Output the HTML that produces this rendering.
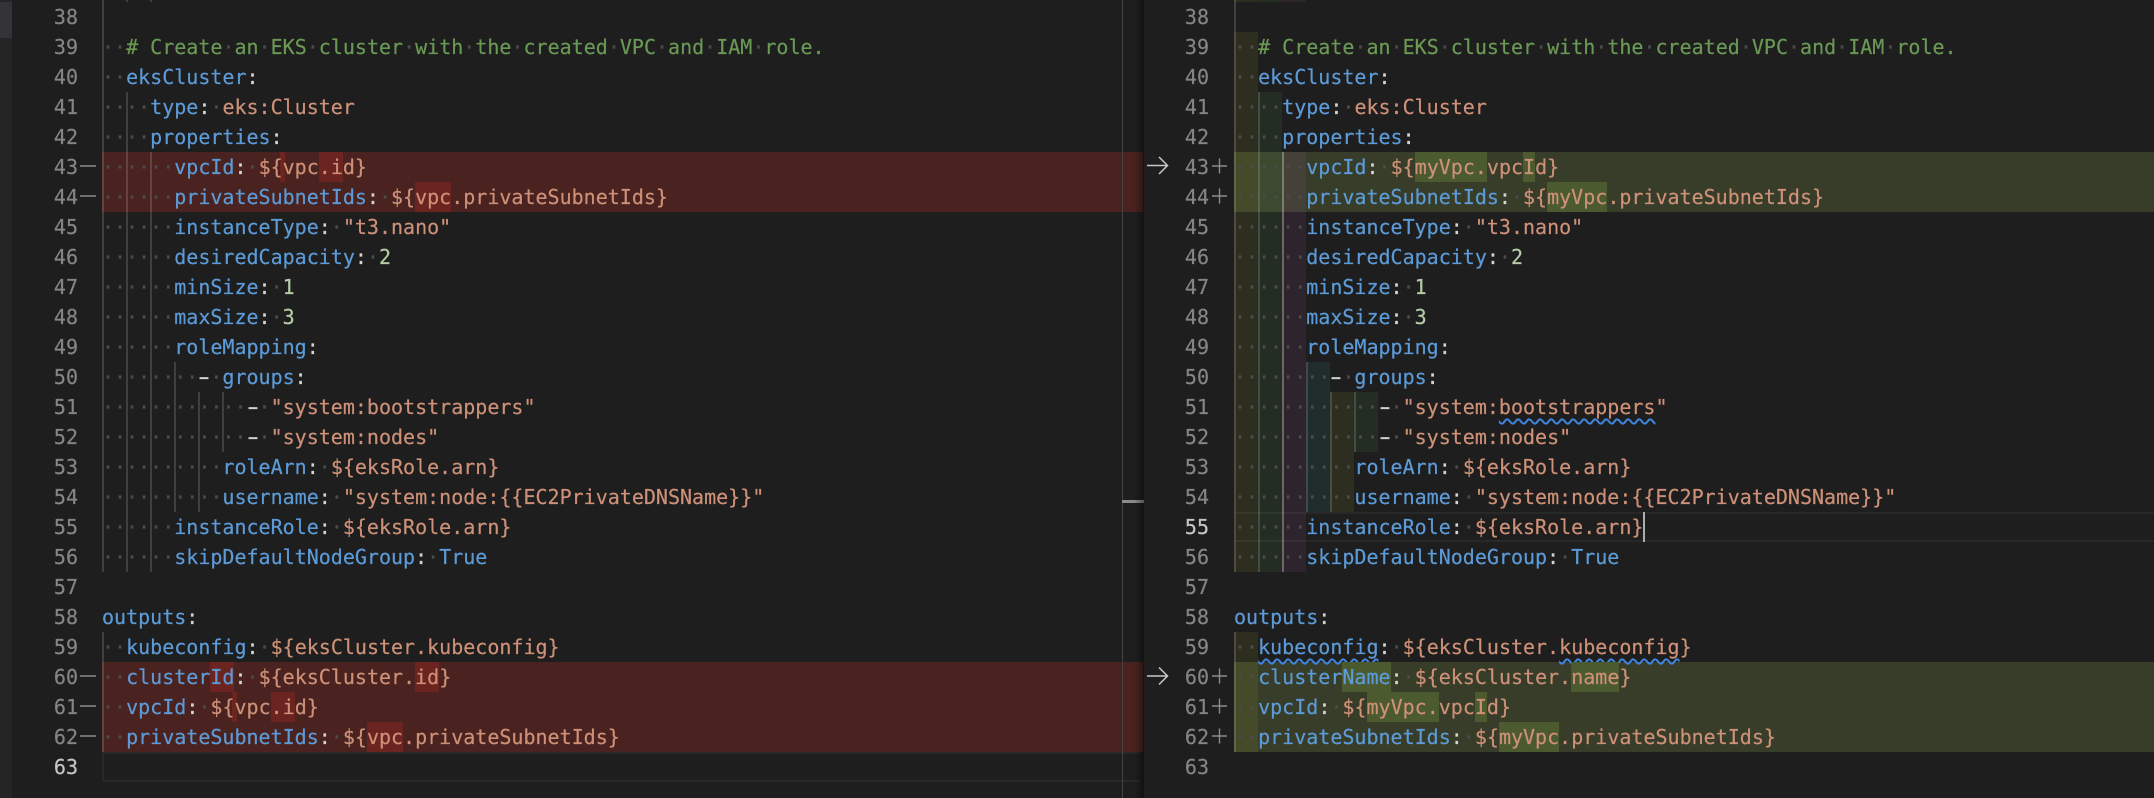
<!DOCTYPE html>
<html><head><meta charset="utf-8"><style>
html,body{margin:0;padding:0;background:#1e1e1e;width:2154px;height:798px;overflow:hidden}
#r{position:relative;width:2154px;height:798px;overflow:hidden;background:#1e1e1e;font:20px/30px "DejaVu Sans Mono","Liberation Mono",monospace;color:#d4d4d4;-webkit-text-stroke:.2px}
#r div.a{position:absolute}
.t{position:absolute;top:2px;overflow:hidden;height:796px}
.t div{height:30px;white-space:pre}
i{font-style:normal;color:#4c4c4c}
b{font-weight:normal;color:#5c9bd8}
u{text-decoration:none;color:#ce9178}
s{text-decoration:none;color:#6a9955}
mark{display:inline-block;height:30px;vertical-align:top;color:inherit}
.L mark{background:#6b2420}
.R mark{background:#4c5a30}
.n{position:absolute;top:2px;text-align:right;color:#858585;width:60px}
.n div{height:30px}
.w{text-decoration:underline wavy #3f84de;text-decoration-thickness:1.8px;text-underline-offset:4px;text-decoration-skip-ink:none}
.h{display:inline-block;transform:scaleX(1.7)}
svg{position:absolute;left:0;top:0}
</style></head><body><div id="r">
<div class="a" style="left:0;top:0;width:12px;height:798px;background:#252526"></div>
<div class="a" style="left:0;top:2px;width:12px;height:36px;background:#333338"></div>

<!-- left line backgrounds -->
<div class="a" style="left:102px;top:152px;width:1041px;height:60px;background:#4a2320"></div>
<div class="a" style="left:102px;top:662px;width:1041px;height:90px;background:#4a2320"></div>
<div class="a" style="left:280px;top:152px;width:5px;height:30px;background:#6b2420"></div>
<div class="a" style="left:232px;top:692px;width:5px;height:30px;background:#6b2420"></div>
<div class="a" style="left:102px;top:752px;width:1038px;height:30px;box-sizing:border-box;border:2px solid #282828;border-right:0"></div>

<!-- right line backgrounds -->
<div class="a" style="left:1234px;top:152px;width:920px;height:60px;background:#373d29"></div>
<div class="a" style="left:1234px;top:662px;width:920px;height:90px;background:#373d29"></div>
<div class="a" style="left:1234px;top:512px;width:920px;height:30px;box-sizing:border-box;border-top:2px solid #282828;border-bottom:2px solid #282828"></div>

<!-- indent rainbow -->
<div class="a" style="left:1234px;top:0;width:24px;height:2px;background:rgba(255,255,64,.07)"></div>
<div class="a" style="left:1258px;top:0;width:24px;height:2px;background:rgba(127,255,127,.07)"></div>
<div class="a" style="left:1282px;top:0;width:24px;height:2px;background:rgba(255,127,255,.07)"></div>
<div class="a" style="left:1234px;top:32px;width:24px;height:540px;background:rgba(255,255,64,.07)"></div>
<div class="a" style="left:1234px;top:632px;width:24px;height:120px;background:rgba(255,255,64,.07)"></div>
<div class="a" style="left:1258px;top:92px;width:24px;height:480px;background:rgba(127,255,127,.07)"></div>
<div class="a" style="left:1282px;top:152px;width:24px;height:420px;background:rgba(255,127,255,.07)"></div>
<div class="a" style="left:1306px;top:362px;width:24px;height:150px;background:rgba(79,236,236,.07)"></div>
<div class="a" style="left:1330px;top:392px;width:24px;height:120px;background:rgba(255,255,64,.07)"></div>
<div class="a" style="left:1354px;top:392px;width:24px;height:60px;background:rgba(127,255,127,.07)"></div>

<!-- left guides -->
<div class="a" style="left:102px;top:0;width:2px;height:572px;background:rgba(255,255,255,.15)"></div>
<div class="a" style="left:102px;top:632px;width:2px;height:120px;background:rgba(255,255,255,.15)"></div>
<div class="a" style="left:126px;top:0;width:2px;height:2px;background:rgba(255,255,255,.15)"></div>
<div class="a" style="left:150px;top:0;width:2px;height:2px;background:rgba(255,255,255,.15)"></div>
<div class="a" style="left:126px;top:92px;width:2px;height:480px;background:rgba(255,255,255,.15)"></div>
<div class="a" style="left:150px;top:152px;width:2px;height:420px;background:rgba(255,255,255,.15)"></div>
<div class="a" style="left:174px;top:362px;width:2px;height:150px;background:rgba(255,255,255,.15)"></div>
<div class="a" style="left:198px;top:392px;width:2px;height:120px;background:rgba(255,255,255,.15)"></div>
<div class="a" style="left:222px;top:392px;width:2px;height:60px;background:rgba(255,255,255,.15)"></div>

<!-- right guides -->
<div class="a" style="left:1234px;top:0;width:2px;height:572px;background:rgba(255,255,255,.15)"></div>
<div class="a" style="left:1234px;top:632px;width:2px;height:120px;background:rgba(255,255,255,.15)"></div>
<div class="a" style="left:1258px;top:92px;width:2px;height:480px;background:rgba(255,255,255,.15)"></div>
<div class="a" style="left:1282px;top:152px;width:2px;height:420px;background:rgba(255,255,255,.3)"></div>
<div class="a" style="left:1306px;top:362px;width:2px;height:150px;background:rgba(255,255,255,.15)"></div>
<div class="a" style="left:1330px;top:392px;width:2px;height:120px;background:rgba(255,255,255,.15)"></div>
<div class="a" style="left:1354px;top:392px;width:2px;height:60px;background:rgba(255,255,255,.15)"></div>

<!-- sash -->
<div class="a" style="left:1122px;top:0;width:1px;height:798px;background:#444"></div>
<div class="a" style="left:1122px;top:500px;width:22px;height:3px;background:#8a8a8a"></div>
<div class="a" style="left:1134px;top:0;width:10px;height:798px;background:linear-gradient(to right,rgba(0,0,0,0),rgba(0,0,0,.4))"></div>

<!-- line numbers -->
<div class="n" style="left:18px"><div>38</div><div>39</div><div>40</div><div>41</div><div>42</div><div>43</div><div>44</div><div>45</div><div>46</div><div>47</div><div>48</div><div>49</div><div>50</div><div>51</div><div>52</div><div>53</div><div>54</div><div>55</div><div>56</div><div>57</div><div>58</div><div>59</div><div>60</div><div>61</div><div>62</div><div style="color:#c6c6c6">63</div></div>
<div class="n" style="left:1149px"><div>38</div><div>39</div><div>40</div><div>41</div><div>42</div><div>43</div><div>44</div><div>45</div><div>46</div><div>47</div><div>48</div><div>49</div><div>50</div><div>51</div><div>52</div><div>53</div><div>54</div><div style="color:#c6c6c6">55</div><div>56</div><div>57</div><div>58</div><div>59</div><div>60</div><div>61</div><div>62</div><div>63</div></div>

<!-- left text -->
<div class="t L" style="left:102px;width:1020px"><div></div>
<div><i>··</i><s># Create<i>·</i>an<i>·</i>EKS<i>·</i>cluster<i>·</i>with<i>·</i>the<i>·</i>created<i>·</i>VPC<i>·</i>and<i>·</i>IAM<i>·</i>role.</s></div>
<div><i>··</i><b>eksCluster</b>:</div>
<div><i>····</i><b>type</b>:<i>·</i><u>eks:Cluster</u></div>
<div><i>····</i><b>properties</b>:</div>
<div><i>······</i><b>vpcId</b>:<i>·</i><u>${vpc<mark>.i</mark>d}</u></div>
<div><i>······</i><b>privateSubnetIds</b>:<i>·</i><u>${<mark>vpc</mark>.privateSubnetIds}</u></div>
<div><i>······</i><b>instanceType</b>:<i>·</i><u>"t3.nano"</u></div>
<div><i>······</i><b>desiredCapacity</b>:<i>·</i><span style="color:#b5cea8">2</span></div>
<div><i>······</i><b>minSize</b>:<i>·</i><span style="color:#b5cea8">1</span></div>
<div><i>······</i><b>maxSize</b>:<i>·</i><span style="color:#b5cea8">3</span></div>
<div><i>······</i><b>roleMapping</b>:</div>
<div><i>········</i><span class="h">-</span><i>·</i><b>groups</b>:</div>
<div><i>············</i><span class="h">-</span><i>·</i><u>"system:bootstrappers"</u></div>
<div><i>············</i><span class="h">-</span><i>·</i><u>"system:nodes"</u></div>
<div><i>··········</i><b>roleArn</b>:<i>·</i><u>${eksRole.arn}</u></div>
<div><i>··········</i><b>username</b>:<i>·</i><u>"system:node:{{EC2PrivateDNSName}}"</u></div>
<div><i>······</i><b>instanceRole</b>:<i>·</i><u>${eksRole.arn}</u></div>
<div><i>······</i><b>skipDefaultNodeGroup</b>:<i>·</i><b>True</b></div>
<div></div>
<div><b>outputs</b>:</div>
<div><i>··</i><b>kubeconfig</b>:<i>·</i><u>${eksCluster.kubeconfig}</u></div>
<div><i>··</i><b>cluster<mark>Id</mark></b>:<i>·</i><u>${eksCluster.<mark>id</mark>}</u></div>
<div><i>··</i><b>vpcId</b>:<i>·</i><u>${vpc<mark>.i</mark>d}</u></div>
<div><i>··</i><b>privateSubnetIds</b>:<i>·</i><u>${<mark>vpc</mark>.privateSubnetIds}</u></div>
</div>

<!-- right text -->
<div class="t R" style="left:1234px;width:920px"><div></div>
<div><i>··</i><s># Create<i>·</i>an<i>·</i>EKS<i>·</i>cluster<i>·</i>with<i>·</i>the<i>·</i>created<i>·</i>VPC<i>·</i>and<i>·</i>IAM<i>·</i>role.</s></div>
<div><i>··</i><b>eksCluster</b>:</div>
<div><i>····</i><b>type</b>:<i>·</i><u>eks:Cluster</u></div>
<div><i>····</i><b>properties</b>:</div>
<div><i>······</i><b>vpcId</b>:<i>·</i><u>${<mark>myVpc.</mark>vpc<mark>I</mark>d}</u></div>
<div><i>······</i><b>privateSubnetIds</b>:<i>·</i><u>${<mark>myVpc</mark>.privateSubnetIds}</u></div>
<div><i>······</i><b>instanceType</b>:<i>·</i><u>"t3.nano"</u></div>
<div><i>······</i><b>desiredCapacity</b>:<i>·</i><span style="color:#b5cea8">2</span></div>
<div><i>······</i><b>minSize</b>:<i>·</i><span style="color:#b5cea8">1</span></div>
<div><i>······</i><b>maxSize</b>:<i>·</i><span style="color:#b5cea8">3</span></div>
<div><i>······</i><b>roleMapping</b>:</div>
<div><i>········</i><span class="h">-</span><i>·</i><b>groups</b>:</div>
<div><i>············</i><span class="h">-</span><i>·</i><u>"system:<span class="w">bootstrappers</span>"</u></div>
<div><i>············</i><span class="h">-</span><i>·</i><u>"system:nodes"</u></div>
<div><i>··········</i><b>roleArn</b>:<i>·</i><u>${eksRole.arn}</u></div>
<div><i>··········</i><b>username</b>:<i>·</i><u>"system:node:{{EC2PrivateDNSName}}"</u></div>
<div><i>······</i><b>instanceRole</b>:<i>·</i><u>${eksRole.arn}</u></div>
<div><i>······</i><b>skipDefaultNodeGroup</b>:<i>·</i><b>True</b></div>
<div></div>
<div><b>outputs</b>:</div>
<div><i>··</i><b class="w">kubeconfig</b>:<i>·</i><u>${eksCluster.<span class="w">kubeconfig</span>}</u></div>
<div><i>··</i><b>cluster<mark>Name</mark></b>:<i>·</i><u>${eksCluster.<mark>name</mark>}</u></div>
<div><i>··</i><b>vpcId</b>:<i>·</i><u>${<mark>myVpc.</mark>vpc<mark>I</mark>d}</u></div>
<div><i>··</i><b>privateSubnetIds</b>:<i>·</i><u>${<mark>myVpc</mark>.privateSubnetIds}</u></div>
</div>

<!-- cursor -->
<div class="a" style="left:1643px;top:512px;width:2px;height:30px;background:#aeafad"></div>

<!-- marks and arrows -->
<svg width="2154" height="798" fill="none">
<g stroke="#8c8c8c" stroke-width="1.4">
<path d="M80 166H96M80 196H96M80 676H96M80 706H96M80 736H96"/>
<path d="M1212 166H1227M1219.5 158.5V173.5M1212 196H1227M1219.5 188.5V203.5M1212 676H1227M1219.5 668.5V683.5M1212 706H1227M1219.5 698.5V713.5M1212 736H1227M1219.5 728.5V743.5"/>
</g>
<g stroke="#c8c8c8" stroke-width="1.5">
<path d="M1147 165.5H1167M1159 157L1167.5 165.5L1159 174"/>
<path d="M1147 676H1167M1159 667.5L1167.5 676L1159 684.5"/>
</g>
</svg>
</div></body></html>
